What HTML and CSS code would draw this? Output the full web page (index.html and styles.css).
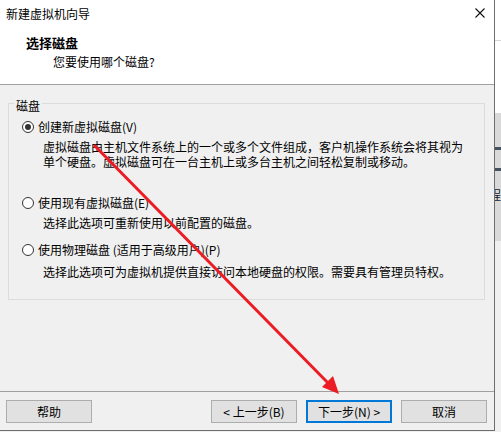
FILE: index.html
```html
<!DOCTYPE html>
<html>
	<head>
		<meta charset="utf-8">
		<title>新建虚拟机向导</title>
		<link rel="stylesheet" href="styles.css">
	</head>
	<body>
		<div class="window">
			<div class="titlebar">
				<span class="title">新建虚拟机向导</span>
				<svg class="close" width="10" height="10" viewBox="0 0 10 10"><path d="M0.5 0.5 L9.5 9.5 M9.5 0.5 L0.5 9.5" stroke="#111" stroke-width="1.1" fill="none"/></svg>
			</div>
			<div class="header">
				<div class="heading">选择磁盘</div>
				<div class="subheading">您要使用哪个磁盘?</div>
			</div>
			<div class="content">
				<fieldset class="group">
					<legend>磁盘</legend>
					<div class="options">
						<div class="option">
							<span class="radio checked"></span>
							<span>创建新虚拟磁盘(V)</span>
						</div>
						<div class="desc">虚拟磁盘由主机文件系统上的一个或多个文件组成，客户机操作系统会将其视为<br>单个硬盘。虚拟磁盘可在一台主机上或多台主机之间轻松复制或移动。</div>
						<div class="option second">
							<span class="radio"></span>
							<span>使用现有虚拟磁盘(E)</span>
						</div>
						<div class="desc">选择此选项可重新使用以前配置的磁盘。</div>
						<div class="option third">
							<span class="radio"></span>
							<span>使用物理磁盘 (适用于高级用户)(P)</span>
						</div>
						<div class="desc last">选择此选项可为虚拟机提供直接访问本地硬盘的权限。需要具有管理员特权。</div>
					</div>
				</fieldset>
			</div>
			<div class="footer">
				<button class="btn">帮助</button>
				<button class="btn back">&lt; 上一步(B)</button>
				<button class="btn primary">下一步(N) &gt;</button>
				<button class="btn">取消</button>
			</div>
		</div>
		<div class="behind">
			<div class="behind-top"></div>
			<div class="behind-mid"></div>
			<div class="behind-panel">
				<div class="bar"></div>
				<div class="bar"></div>
				<div class="glyph">程</div>
			</div>
			<div class="behind-low"></div>
		</div>

		<!-- annotation arrow drawn over the dialog -->
		<svg class="arrow" width="501" height="432" viewBox="0 0 501 432">
			<line x1="94" y1="145" x2="331" y2="386" stroke="#ec1c24" stroke-width="3"/>
			<polygon points="339,394 322,387 333,376" fill="#ec1c24"/>
		</svg>
	</body>
</html>
```

FILE: styles.css
```css
body {
	margin: 0;
	width: 501px;
	height: 432px;
	overflow: hidden;
	display: flex;
	position: relative;
	background: #f0f0f0;
	font-family: "Noto Sans CJK SC", "Microsoft YaHei", sans-serif;
	font-size: 12px;
	color: #000;
}

.window {
	width: 495px;
	height: 431px;
	box-sizing: border-box;
	border-right: 1px solid #6e6e6e;
	border-bottom: 1px solid #6e6e6e;
	display: flex;
	flex-direction: column;
	background: #f0f0f0;
}

.titlebar {
	height: 28px;
	background: #fff;
	display: flex;
	align-items: center;
	justify-content: space-between;
	padding: 0 9px 0 6px;
	line-height: 28px;
}

.close {
	margin-top: -2px;
}

.header {
	height: 57px;
	box-sizing: border-box;
	background: #fff;
	border-bottom: 1px solid #a0a0a0;
	padding: 7px 0 0 26px;
	line-height: 16px;
}

.heading {
	font-weight: bold;
	font-size: 13px;
}

.subheading {
	margin-top: 3px;
	padding-left: 27px;
}

.content {
	flex: 1;
	padding: 8px 8px 0 8px;
}

.group {
	margin: 0;
	padding: 0;
	border: 1px solid #dcdcdc;
	width: 477px;
	box-sizing: border-box;
}

.group legend {
	margin-left: 5px;
	padding: 6px 2px 0;
	line-height: 14px;
}

.options {
	padding: 6px 0 20px 13px;
	line-height: 15px;
}

.option {
	display: flex;
	align-items: center;
	gap: 4px;
}

.option.second {
	margin-top: 26px;
}

.option.third {
	margin-top: 12px;
}

.radio {
	width: 12px;
	height: 12px;
	box-sizing: border-box;
	border: 1px solid #333;
	border-radius: 50%;
	background: #fff;
	display: flex;
	align-items: center;
	justify-content: center;
}

.radio.checked::after {
	content: "";
	width: 6px;
	height: 6px;
	border-radius: 50%;
	background: #333;
}

.desc {
	margin-top: 5px;
	padding-left: 21px;
}

.desc.last {
	margin-top: 7px;
}

.footer {
	border-top: 1px solid #a0a0a0;
	padding: 8px 7px 7px 6px;
	display: flex;
	gap: 9px;
}

.btn {
	width: 86px;
	height: 23px;
	box-sizing: border-box;
	background: #e1e1e1;
	border: 1px solid #adadad;
	font-family: inherit;
	font-size: 12px;
	color: #000;
	padding: 0;
	line-height: 20px;
}

.btn.back {
	margin-left: auto;
}

.btn.primary {
	border: 2px solid #0078d7;
}

.behind {
	flex: 1;
	display: flex;
	flex-direction: column;
	overflow: hidden;
}

.behind-top {
	height: 40px;
	background: #fff;
	border-bottom: 1px solid #d4d4d4;
}

.behind-mid {
	height: 72px;
	background: #fff;
}

.behind-panel {
	height: 128px;
	background: #d9d9d9;
	padding-top: 34px;
	box-sizing: border-box;
}

.bar {
	height: 3px;
	background: #44535f;
	margin-bottom: 18px;
}

.glyph {
	margin-top: 6px;
	margin-left: -6px;
	font-size: 12px;
	line-height: 12px;
	color: #1a1a1a;
}

.behind-low {
	flex: 1;
	background: #f0f0f0;
}

.arrow {
	position: absolute;
	left: 0;
	top: 0;
	pointer-events: none;
}
```
